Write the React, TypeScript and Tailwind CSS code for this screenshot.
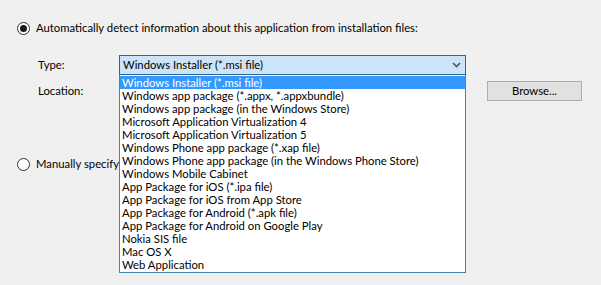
import React from "react";

const items = [
  "Windows Installer (*.msi file)",
  "Windows app package (*.appx, *.appxbundle)",
  "Windows app package (in the Windows Store)",
  "Microsoft Application Virtualization 4",
  "Microsoft Application Virtualization 5",
  "Windows Phone app package (*.xap file)",
  "Windows Phone app package (in the Windows Phone Store)",
  "Windows Mobile Cabinet",
  "App Package for iOS (*.ipa file)",
  "App Package for iOS from App Store",
  "App Package for Android (*.apk file)",
  "App Package for Android on Google Play",
  "Nokia SIS file",
  "Mac OS X",
  "Web Application",
];

const Radio: React.FC<{ checked?: boolean }> = ({ checked }) => (
  <div className="w-[13px] h-[13px] rounded-full border border-[#333333] bg-white flex items-center justify-center shrink-0">
    {checked && <div className="w-[7px] h-[7px] rounded-full bg-[#1a1a1a]" />}
  </div>
);

const App: React.FC = () => {
  return (
    <div className="relative w-[601px] h-[285px] overflow-hidden bg-[#f0f0f0] text-[11.3px] leading-[14px] text-black font-['Lato','Liberation_Sans',sans-serif]">
      <div className="pt-[20px]">
        <div className="flex items-center gap-[6px] pl-[17px] h-[16px]">
          <Radio checked />
          <span>Automatically detect information about this application from installation files:</span>
        </div>
      </div>

      <div className="flex items-center pl-[38px] mt-[19px] h-[20px]">
        <span className="w-[81px]">Type:</span>
        <div className="w-[347px] h-[20px] border border-[#2f6390] bg-[#cce4f7] flex items-center justify-between pl-[3px] pr-[4px]">
          <span>Windows Installer (*.msi file)</span>
          <svg width="9" height="6" viewBox="0 0 9 6">
            <path d="M1 1 L4.5 4.5 L8 1" stroke="#555" strokeWidth="1.6" fill="none" />
          </svg>
        </div>
      </div>

      <div className="flex items-center pl-[38px] mt-[6px] h-[20px]">
        <span className="w-[449px]">Location:</span>
        <button className="w-[95px] h-[20px] border border-[#adadad] bg-[#e1e1e1] text-[11.3px]">Browse...</button>
      </div>

      <div className="flex items-center gap-[6px] pl-[17px] mt-[55px] h-[16px]">
        <Radio />
        <span className="w-[83px] overflow-hidden whitespace-nowrap">Manually specify the information about this application</span>
      </div>

      <div className="absolute left-[119px] top-[75px] w-[347px] h-[198px] bg-white border border-[#3c8aa8] border-t-0 flex flex-col">
        {items.map((item, i) => (
          <div
            key={item}
            className={
              i === 0
                ? "h-[13px] leading-[13px] pl-[2px] bg-[#3399ff] text-white mt-[1px]"
                : "h-[13px] leading-[13px] pl-[2px] whitespace-nowrap"
            }
          >
            {item}
          </div>
        ))}
      </div>
    </div>
  );
};

export default App;
